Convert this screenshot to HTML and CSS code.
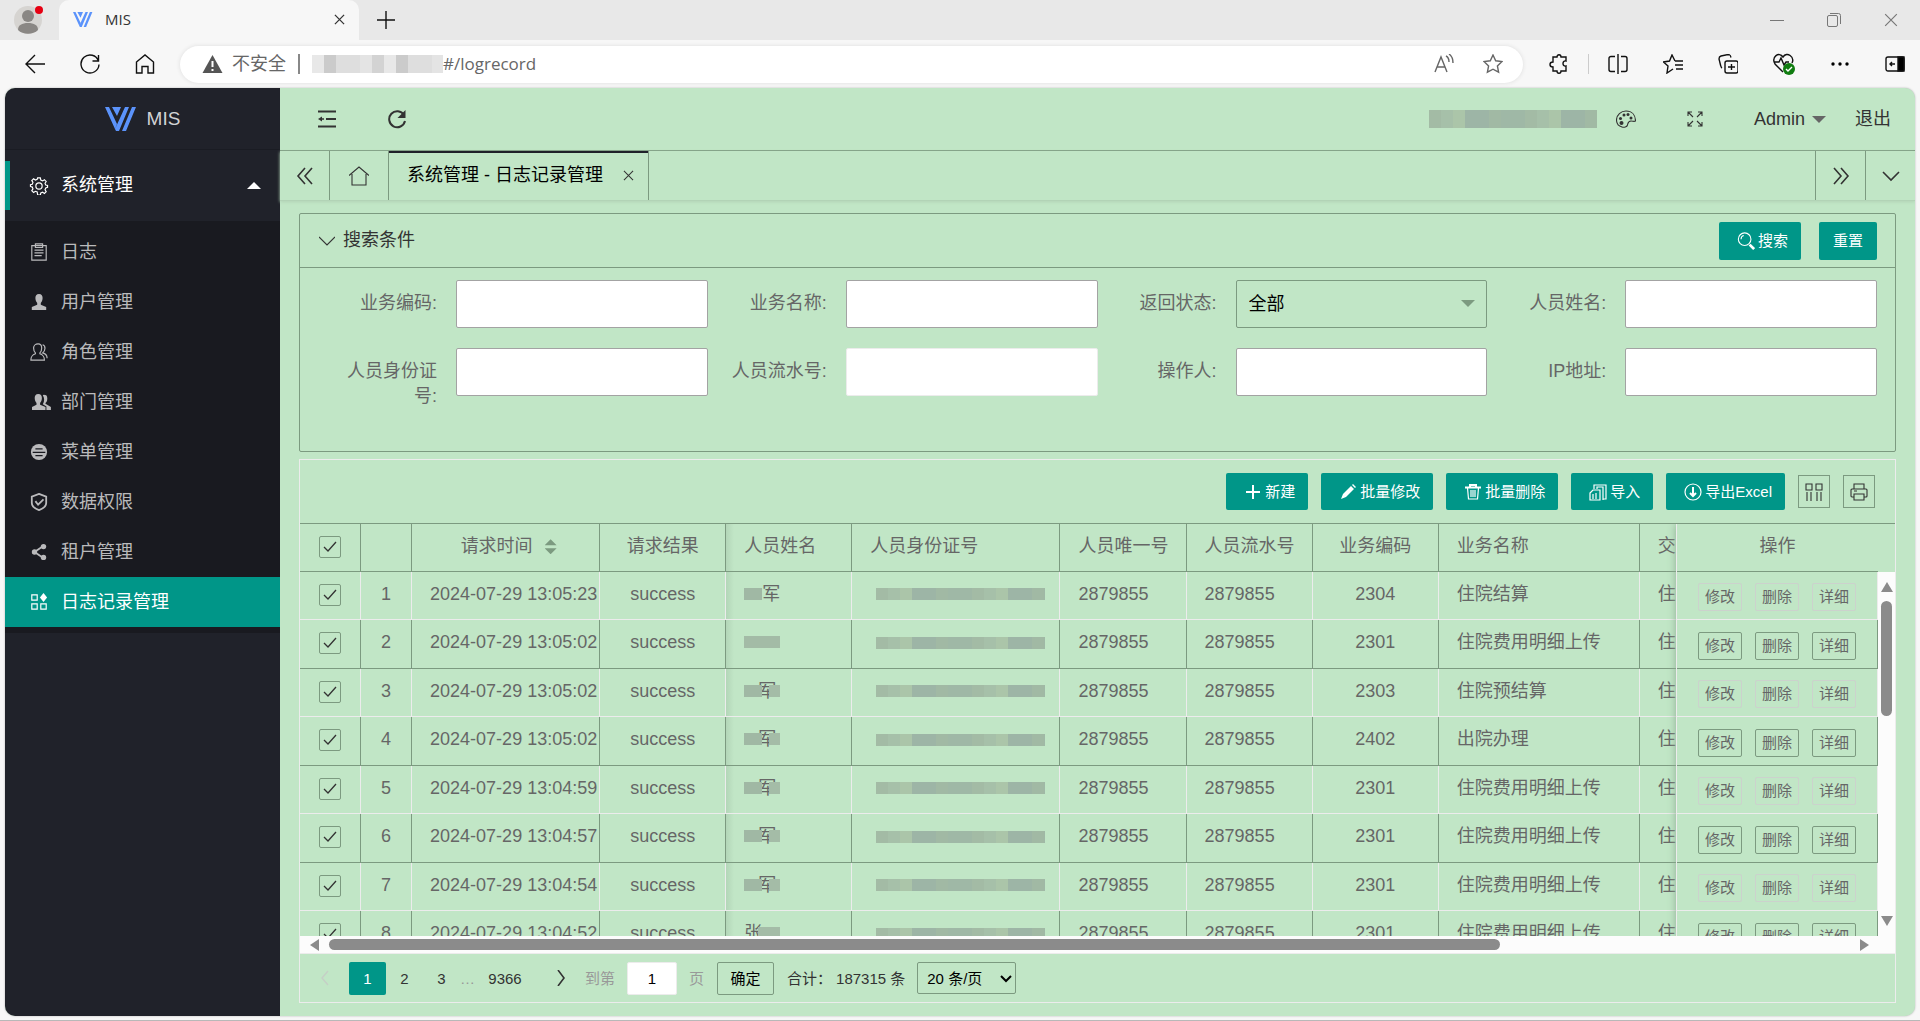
FILE: index.html
```html
<!DOCTYPE html>
<html lang="zh-CN">
<head>
<meta charset="utf-8">
<title>MIS</title>
<link rel="stylesheet" href="styles.css">
</head>
<body>
<svg class="sprite" aria-hidden="true">
  <symbol id="i-logo" viewBox="0 0 32 26"><path fill="#5b93fb" d="M0 1h4l8 17-2 5zM7 1h9l-4 9zM20 1h4L14 25h-3l-1-2zM27 1h4L21 25h-4z"/></symbol>
  <symbol id="i-close" viewBox="0 0 12 12"><path d="M1 1l10 10M11 1L1 11"/></symbol>
  <symbol id="i-star" viewBox="0 0 20 20"><path d="M10 1l2.700 5.800 6.300.8-4.600 4.300 1.200 6.300L10 15.200l-5.600 3 1.200-6.300L1 7.600l6.300-.8z"/></symbol>
</svg>

<header class="browser">
  <div class="tabstrip">
    <div class="profile"><svg viewBox="0 0 28 28"><circle cx="14" cy="14" r="14" fill="#d6d4d1"/><circle cx="14" cy="10" r="6" fill="#8a8784"/><path fill="#8a8784" d="M4 24c0-5 4-7 10-7s10 2 10 7c-5 5-15 5-20 0z"/></svg><i class="dot"></i></div>
    <div class="btab"><svg class="fav"><use href="#i-logo"/></svg><span>MIS</span><button class="plain" aria-label="关闭标签页"><svg class="line s11"><use href="#i-close"/></svg></button></div>
    <button class="plain newtab" aria-label="新建标签页"><svg class="line s18" viewBox="0 0 18 18"><path d="M9 0v18M0 9h18"/></svg></button>
    <div class="winctl">
      <button class="plain" aria-label="最小化"><svg class="line s14" viewBox="0 0 14 14"><path d="M0 7.500h14"/></svg></button>
      <button class="plain" aria-label="还原"><svg class="line s14" viewBox="0 0 14 14"><rect x=".5" y="2.500" width="10" height="11" rx="1.500"/><path d="M3 .5h8.500a2 2 0 012 2V11"/></svg></button>
      <button class="plain" aria-label="关闭"><svg class="line s14" viewBox="0 0 12 12"><use href="#i-close"/></svg></button>
    </div>
  </div>
  <div class="toolbar">
    <nav class="navbtns">
      <button class="plain" aria-label="后退"><svg class="line s20" viewBox="0 0 20 20"><path d="M20 10H1M10 1L1 10l9 9"/></svg></button>
      <button class="plain" aria-label="刷新"><svg class="line s20" viewBox="0 0 20 20"><path d="M18.500 7A9 9 0 1019 10.500M18.500 1v6h-6"/></svg></button>
      <button class="plain" aria-label="主页"><svg class="line s20" viewBox="0 0 20 20"><path d="M1.500 8L10 1l8.500 7v11H13v-6.500H7V19H1.500z"/></svg></button>
    </nav>
    <div class="urlbar">
      <svg class="warn" viewBox="0 0 20 18"><path fill="#555" d="M10 0l10 18H0z"/><path stroke="#fff" stroke-width="2" d="M10 6v6M10 14v2"/></svg>
      <span class="unsafe">不安全</span><i class="vbar"></i>
      <span class="mosaic url"></span><span class="addr">#/logrecord</span>
      <span class="urlicons">
        <svg class="line s20" viewBox="0 0 20 20"><path d="M1 18L7 3l6 15M3 13h8M12 2c2 1 3 3 3 6M15 0c3 2 4 5 4 9"/></svg>
        <svg class="line s20"><use href="#i-star"/></svg>
      </span>
    </div>
    <div class="tools">
      <svg class="line s20" viewBox="0 0 20 20"><path d="M4 3h4c0-3 4-3 4 0h5v4c-4-1-4 6 0 5v5h-5c0 3-4 3-4 0H4v-4c-4 0-4-5 0-5z"/></svg>
      <i class="sep"></i>
      <svg class="line s20" viewBox="0 0 20 20"><path d="M10 0v20M7 2.500H3a2 2 0 00-2 2v11a2 2 0 002 2h4M13 2.500h4a2 2 0 012 2v11a2 2 0 01-2 2h-4"/></svg>
      <svg class="line s20" viewBox="0 0 20 20"><path d="M12 7L9 1 6.500 7 .5 8l4.500 4-1 7 6-4M12 7h8M12 11h8M13 15h7"/></svg>
      <svg class="line s20" viewBox="0 0 20 20"><rect x="7" y="7" width="13" height="12" rx="2"/><path d="M13.500 10v6M10 13h7M4 14c-1-.5-1-1-1.500-3L1 5c0-2 .5-2.500 2-3l7-1.500c2 0 2.500.5 3 3"/></svg>
      <svg class="line s22" viewBox="0 0 22 22"><path d="M10 19L2 11C-2 4 6-2 10 4c4-6 12 0 9 6M1 9h5l2-4 3 7 2-3h3"/><circle cx="16" cy="16" r="6" fill="#107c10" stroke="none"/><path stroke="#fff" d="M13 16l2 2 4-4"/></svg>
      <svg class="s20" viewBox="0 0 20 20"><circle cx="3" cy="10" r="1.700"/><circle cx="10" cy="10" r="1.700"/><circle cx="17" cy="10" r="1.700"/></svg>
      <svg class="line s20" viewBox="0 0 20 20"><rect x="1" y="3" width="18" height="14" rx="2"/><path fill="#000" d="M13 3h6v14h-6z"/><path d="M10 10H5M7 8l-2 2 2 2"/></svg>
    </div>
  </div>
</header>

<div class="app">
  <aside class="side">
    <div class="brand"><svg><use href="#i-logo"/></svg><span>MIS</span></div>
    <a class="group" href="#"><svg class="mi" viewBox="0 0 20 20"><circle cx="10" cy="10" r="3.500"/><path d="M8.500 1h3l.5 2.500 2 .8 2-1.300 2 2-1.300 2 .8 2 2 .5v2l-2 .7-.8 2 1.300 2-2 2-2-1.300-2 .8-.5 2.300h-3L8 16.700l-2-.8-2 1.300-2-2 1.300-2-.8-2-2-.7v-2l2-.5.800-2-1.300-2 2-2 2 1.300 2-.8z"/></svg><span>系统管理</span><i class="up"></i></a>
    <nav class="menu">
      <a href="#"><svg class="mi" viewBox="0 0 20 20"><path d="M2 3h16v16H2zM6 3V1h8v4H6zM5 8h10M5 11h10M5 14h8"/></svg>日志</a>
      <a href="#"><svg class="mi" viewBox="0 0 20 20"><path class="f" d="M10 1c3 0 4 2 4 4.500S13 10 12 11v2l6 2.500V19H2v-3.500L8 13v-2C7 10 6 8 6 5.500S7 1 10 1z"/></svg>用户管理</a>
      <a href="#"><svg class="mi" viewBox="0 0 20 20"><path d="M9 1c3 0 4 2 4 4.500S12 10 11 11v1c4 1.500 5 3 5 7H1c0-4 1-5.500 5-7v-1C5 10 4 8 4 5.500S6 1 9 1zM14 2c4 1 3 7 0 9 4 1 5 3 5 6"/></svg>角色管理</a>
      <a href="#"><svg class="mi wide" viewBox="0 0 24 20"><path class="f" d="M9 1c3 0 4 2 4 4.500S12 10 11 11v2l6 2.500V19H2v-3.500L7 13v-2C6 10 5 8 5 5.500S6 1 9 1zM15 2c3 0 4 1 4 4s-1 4-2 5v1l6 3.500V19h-5v-4l-4-2.500c2-3 2-7 0-10z"/></svg>部门管理</a>
      <a href="#"><svg class="mi" viewBox="0 0 20 20"><circle class="f" cx="10" cy="10" r="9"/><path stroke="#191a20" d="M6 6.500h8M3 10.500h14M6 14h8"/></svg>菜单管理</a>
      <a href="#"><svg class="mi" viewBox="0 0 20 20"><path stroke-width="2" d="M10 1l8 3v7c0 4-4 6.500-8 8-4-1.500-8-4-8-8V4zM6 9l3 4 6-6"/></svg>数据权限</a>
      <a href="#"><svg class="mi" viewBox="0 0 20 20"><path stroke-width="2" d="M14 4L5 10l9 6"/><circle class="f" cx="15" cy="4" r="3"/><circle class="f" cx="5" cy="10" r="3"/><circle class="f" cx="15" cy="16" r="3"/></svg>租户管理</a>
      <a href="#" class="on"><svg class="mi" viewBox="0 0 20 20"><path d="M2 2h6v6H2zM2 12h6v6H2zM12 12h6v6h-6z"/><path class="f" d="M15 0l4 5-4 5-4-5z"/></svg>日志记录管理</a>
    </nav>
  </aside>

  <main class="main">
    <div class="topbar">
      <button class="plain" aria-label="侧边伸缩"><svg class="ico s20" viewBox="0 0 20 20"><path stroke-width="2" d="M1 2.500h18M9 10h10M1 17.500h18"/><path fill="#333" stroke="none" d="M1 10l4-2.500v5z"/><path d="M4 10h3"/></svg></button>
      <button class="plain" aria-label="刷新"><svg class="ico s20" viewBox="0 0 20 20"><path stroke-width="2" d="M17 6a8 8 0 101 6"/><path fill="#333" stroke="none" d="M18.500 1v8h-8z"/></svg></button>
      <div class="right">
        <span class="mosaic head"></span>
        <button class="plain" aria-label="主题"><svg class="ico thin s20" viewBox="0 0 20 20"><path d="M10 2c6 0 9.500 4 9.500 10-1.500 1-2.500 0-4.500 0-3 0-3 2-3.500 4S8 18.500 6 18C2 17 .5 14 .5 11 .5 6 5 2 10 2z"/><g fill="#333" stroke="none"><circle cx="8" cy="6" r="1.500"/><circle cx="12" cy="5.500" r="1.500"/><circle cx="15" cy="9" r="1.500"/><circle cx="4.500" cy="9.500" r="1.500"/><circle cx="5.500" cy="14" r="2"/></g></svg></button>
        <button class="plain" aria-label="全屏"><svg class="ico thin s16" viewBox="0 0 16 16"><path d="M1 5V1h4M1 1l5 5M11 1h4v4M15 1l-5 5M1 11v4h4M1 15l5-5M15 11v4h-4M15 15l-5-5"/></svg></button>
        <a href="#" class="user">Admin<i class="down"></i></a>
        <a href="#">退出</a>
      </div>
    </div>
    <div class="tabs">
      <button class="plain tc first" aria-label="左移"><svg class="ico s18" viewBox="0 0 18 18"><path d="M9 1L2 9l7 8M16 1L9 9l7 8"/></svg></button>
      <button class="plain tc hm" aria-label="首页"><svg class="ico thin s20" viewBox="0 0 20 20"><path d="M0 9.500L10 1l10 8.500M3 8v11h14V8"/></svg></button>
      <div class="tab"><span>系统管理 - 日志记录管理</span><button class="plain" aria-label="关闭"><svg class="ico thin s11"><use href="#i-close"/></svg></button></div>
      <button class="plain tc push" aria-label="右移"><svg class="ico s18" viewBox="0 0 18 18"><path d="M2 1l7 8-7 8M9 1l7 8-7 8"/></svg></button>
      <button class="plain tc" aria-label="更多"><svg class="ico s18" viewBox="0 0 18 18"><path d="M1 5l8 8 8-8"/></svg></button>
    </div>

    <div class="content">
      <form class="search">
        <div class="shead">
          <svg class="ico thin s16" viewBox="0 0 16 16"><path d="M0 4l8 8 8-8"/></svg><h2>搜索条件</h2>
          <button type="button" class="btn"><svg class="bi big" viewBox="0 0 20 20"><circle cx="8.500" cy="8" r="7"/><path d="M4.500 8a4 4 0 013-4"/><path stroke-width="3" d="M14 14l5 5"/></svg>搜索</button>
          <button type="button" class="btn reset">重置</button>
        </div>
        <div class="fields">
          <div class="field"><label for="f1">业务编码:</label><input id="f1"></div>
          <div class="field"><label for="f2">业务名称:</label><input id="f2"></div>
          <div class="field"><label for="f3">返回状态:</label><div class="sel"><select id="f3"><option>全部</option></select><i class="down"></i></div></div>
          <div class="field"><label for="f4">人员姓名:</label><input id="f4"></div>
          <div class="field"><label for="f5">人员身份证号:</label><input id="f5"></div>
          <div class="field"><label for="f6">人员流水号:</label><input id="f6" class="pale"></div>
          <div class="field"><label for="f7">操作人:</label><input id="f7"></div>
          <div class="field"><label for="f8">IP地址:</label><input id="f8"></div>
        </div>
      </form>

      <section class="grid">
        <div class="gtools">
          <button class="btn"><svg class="bi" viewBox="0 0 16 16"><path stroke-width="2" d="M8 1v14M1 8h14"/></svg>新建</button>
          <button class="btn"><svg class="bi" viewBox="0 0 16 16"><path fill="#fff" stroke="none" d="M1 15l2-5 8-8 3 3-8 8zM12 1l1-1 3 3-1 1z"/></svg>批量修改</button>
          <button class="btn"><svg class="bi" viewBox="0 0 16 16"><path stroke-width="2" d="M0 3.500h16M5 3V1h6v2"/><path d="M2.500 4l1 11h9l1-11M6 6v7M8 6v7M10 6v7"/></svg>批量删除</button>
          <button class="btn"><svg class="bi big" viewBox="0 0 18 18"><path d="M5 6V2h12v14h-3M8 6V4h6v13M1 10l3-3h7v10H1zM4 11v5M7 10v6"/></svg>导入</button>
          <button class="btn"><svg class="bi big" viewBox="0 0 18 18"><circle cx="9" cy="9" r="8"/><path stroke-width="2" d="M9 4v9M6 10l3 3 3-3"/></svg>导出Excel</button>
          <button class="sq" aria-label="筛选列"><svg class="ico thin s18" viewBox="0 0 18 18"><path d="M1 1h6v6H1zM11 1h6v6h-6zM2 9v9M6 9v9M12 9v9M16 9v9"/></svg></button>
          <button class="sq" aria-label="打印"><svg class="ico thin s18" viewBox="0 0 18 18"><path d="M4 6V1h10v5M4 14H2a1 1 0 01-1-1V7a1 1 0 011-1h14a1 1 0 011 1v6a1 1 0 01-1 1h-2M4 11h10v6H4zM4 8h3"/></svg></button>
        </div>
        <div class="gbody">
          <div class="data">
            <table>
              <colgroup><col class="w-check"><col class="w-no"><col class="w-time"><col class="w-std"><col class="w-std"><col class="w-id"><col class="w-std"><col class="w-std"><col class="w-std"><col class="w-name"><col class="w-std"></colgroup>
              <thead><tr><th class="c"><input type="checkbox" checked aria-label="全选"></th><th></th><th class="c sorted">请求时间<span class="sort"></span></th><th class="c">请求结果</th><th class="shade">人员姓名</th><th>人员身份证号</th><th>人员唯一号</th><th>人员流水号</th><th class="c">业务编码</th><th>业务名称</th><th>交易</th></tr></thead>
              <tbody>
                <tr><td class="c"><input type="checkbox" checked aria-label="选择第1行"></td><td class="c">1</td><td class="t">2024-07-29 13:05:23</td><td class="c">success</td><td class="shade"><span class="nm a">军</span></td><td><span class="mosaic idn"></span></td><td>2879855</td><td>2879855</td><td class="c">2304</td><td>住院结算</td><td>住院</td></tr>
                <tr><td class="c"><input type="checkbox" checked aria-label="选择第2行"></td><td class="c">2</td><td class="t">2024-07-29 13:05:02</td><td class="c">success</td><td class="shade"><span class="nm b"></span></td><td><span class="mosaic idn"></span></td><td>2879855</td><td>2879855</td><td class="c">2301</td><td>住院费用明细上传</td><td>住院</td></tr>
                <tr><td class="c"><input type="checkbox" checked aria-label="选择第3行"></td><td class="c">3</td><td class="t">2024-07-29 13:05:02</td><td class="c">success</td><td class="shade"><span class="nm">军</span></td><td><span class="mosaic idn"></span></td><td>2879855</td><td>2879855</td><td class="c">2303</td><td>住院预结算</td><td>住院</td></tr>
                <tr><td class="c"><input type="checkbox" checked aria-label="选择第4行"></td><td class="c">4</td><td class="t">2024-07-29 13:05:02</td><td class="c">success</td><td class="shade"><span class="nm">军</span></td><td><span class="mosaic idn"></span></td><td>2879855</td><td>2879855</td><td class="c">2402</td><td>出院办理</td><td>住院</td></tr>
                <tr><td class="c"><input type="checkbox" checked aria-label="选择第5行"></td><td class="c">5</td><td class="t">2024-07-29 13:04:59</td><td class="c">success</td><td class="shade"><span class="nm">军</span></td><td><span class="mosaic idn"></span></td><td>2879855</td><td>2879855</td><td class="c">2301</td><td>住院费用明细上传</td><td>住院</td></tr>
                <tr><td class="c"><input type="checkbox" checked aria-label="选择第6行"></td><td class="c">6</td><td class="t">2024-07-29 13:04:57</td><td class="c">success</td><td class="shade"><span class="nm">军</span></td><td><span class="mosaic idn"></span></td><td>2879855</td><td>2879855</td><td class="c">2301</td><td>住院费用明细上传</td><td>住院</td></tr>
                <tr><td class="c"><input type="checkbox" checked aria-label="选择第7行"></td><td class="c">7</td><td class="t">2024-07-29 13:04:54</td><td class="c">success</td><td class="shade"><span class="nm">军</span></td><td><span class="mosaic idn"></span></td><td>2879855</td><td>2879855</td><td class="c">2301</td><td>住院费用明细上传</td><td>住院</td></tr>
                <tr><td class="c"><input type="checkbox" checked aria-label="选择第8行"></td><td class="c">8</td><td class="t">2024-07-29 13:04:52</td><td class="c">success</td><td class="shade"><span class="nm z">张</span></td><td><span class="mosaic idn"></span></td><td>2879855</td><td>2879855</td><td class="c">2301</td><td>住院费用明细上传</td><td>住院</td></tr>
              </tbody>
            </table>
          </div>
          <div class="ops">
            <table>
              <thead><tr><th class="c">操作</th></tr></thead>
              <tbody>
                <tr><td><div class="acts"><button>修改</button><button>删除</button><button>详细</button></div></td></tr>
                <tr><td><div class="acts"><button>修改</button><button>删除</button><button>详细</button></div></td></tr>
                <tr><td><div class="acts"><button>修改</button><button>删除</button><button>详细</button></div></td></tr>
                <tr><td><div class="acts"><button>修改</button><button>删除</button><button>详细</button></div></td></tr>
                <tr><td><div class="acts"><button>修改</button><button>删除</button><button>详细</button></div></td></tr>
                <tr><td><div class="acts"><button>修改</button><button>删除</button><button>详细</button></div></td></tr>
                <tr><td><div class="acts"><button>修改</button><button>删除</button><button>详细</button></div></td></tr>
                <tr><td><div class="acts"><button>修改</button><button>删除</button><button>详细</button></div></td></tr>
              </tbody>
            </table>
          </div>
          <div class="vcol"><div class="vhead"></div><div class="vscroll"><i class="tri n"></i><i class="thumb"></i><i class="tri s"></i></div></div>
        </div>
        <div class="hscroll"><i class="tri w"></i><div class="track"><i class="thumb"></i></div><i class="tri e"></i></div>
        <footer class="pager">
          <button class="plain pg off" aria-label="上一页"><svg class="s16 line" viewBox="0 0 16 16"><path d="M11 1L5 8l6 7"/></svg></button>
          <a class="pg cur" href="#">1</a><a class="pg" href="#">2</a><a class="pg" href="#">3</a><span class="dots">…</span><a class="pg last" href="#">9366</a>
          <button class="plain pg next" aria-label="下一页"><svg class="s16 ico" viewBox="0 0 16 16"><path d="M5 0l6 8-6 8"/></svg></button>
          <label class="dim" for="pn">到第</label><input id="pn" value="1"><span class="dim">页</span>
          <button class="ok">确定</button><span class="total">合计：</span><span class="cnt">187315 条</span>
          <div class="psel"><select aria-label="每页条数"><option>20 条/页</option></select><svg viewBox="0 0 12 8"><path d="M1 1l5 5 5-5"/></svg></div>
        </footer>
      </section>
    </div>
  </main>
</div>
</body>
</html>
```
FILE: styles.css
```css
:root {
  --green: #c1e6c6;
  --edge: #7c9a80;
  --pale: #ececec;
  --teal: #009688;
}
* { box-sizing: border-box; }
body {
  margin: 0;
  height: 100vh;
  display: flex;
  flex-direction: column;
  background: #f7f7f7;
  border-bottom: 1px solid #b8b8b8;
  font: 18px/25px "Liberation Sans", "Noto Sans CJK SC", sans-serif;
  color: #333;
  overflow: hidden;
}
a { color: inherit; text-decoration: none; }
button, input, select { font: inherit; color: inherit; margin: 0; border-radius: 0; }
svg { display: block; flex: none; }
.sprite { display: none; }
.plain { border: 0; background: none; padding: 0; display: flex; align-items: center; justify-content: center; }
.line { fill: none; stroke: currentColor; stroke-width: 1.4; }
.ico { fill: none; stroke: #333; stroke-width: 1.6; }
.thin { stroke-width: 1.1; }
.s11 { width: 11px; height: 11px; }
.s14 { width: 14px; height: 14px; }
.s16 { width: 16px; height: 16px; }
.s18 { width: 18px; height: 18px; }
.s20 { width: 20px; height: 20px; }
.s22 { width: 22px; height: 22px; }

/* browser frame */
.browser { flex: none; height: 88px; color: #111; }
.tabstrip { height: 40px; background: #e8e8e8; display: flex; align-items: center; }
.profile { position: relative; width: 59px; padding-left: 14px; }
.profile svg { width: 28px; height: 28px; }
.dot { position: absolute; left: 35px; top: 0; width: 8px; height: 8px; border-radius: 50%; background: #e60012; }
.btab { width: 300px; height: 40px; background: #f7f7f7; border-radius: 10px 10px 0 0; display: flex; align-items: center; padding: 0 14px 2px; font: 15px/20px "Open Sans", sans-serif; color: #333; }
.btab span { flex: 1; }
.fav { width: 20px; height: 17px; margin-right: 12px; }
.newtab { width: 54px; height: 40px; }
.winctl { margin-left: auto; display: flex; gap: 43px; padding-right: 22px; color: #777; }
.winctl .line { stroke-width: 1; }
.toolbar { height: 48px; display: flex; align-items: center; }
.navbtns { width: 180px; display: flex; gap: 35px; padding-left: 25px; }
.urlbar { flex: 1; height: 37px; border-radius: 19px; background: #fff; box-shadow: 0 0 4px #ddd; display: flex; align-items: center; padding: 0 20px 0 22px; color: #666; }
.warn { width: 21px; height: 18px; margin-right: 9px; }
.vbar { width: 2px; height: 20px; background: #888; margin: 0 12px 0 12px; }
.addr { font: 17px/24px "Open Sans", sans-serif; }
.urlicons { margin-left: auto; display: flex; gap: 29px; }
.tools { width: 397px; display: flex; align-items: center; gap: 35px; padding-left: 26px; }
.sep { width: 1px; height: 20px; background: #ccc; margin: 0 -16px; }
.mosaic { display: block; background: repeating-linear-gradient(90deg, #a3bba5 0 12px, #a6c0a9 12px 24px, #abc5a9 24px 36px, #9db5a6 36px 60px, #a1b9a4 60px 72px, #9fb8a6 72px 96px); }
.mosaic.url { width: 131px; height: 18px; background: repeating-linear-gradient(90deg, #e8e8e8 0 12px, #cbcbcb 12px 24px, #dedede 24px 48px, #e4e4e4 48px 60px, #d3d3d3 60px 72px); }
.mosaic.head { width: 168px; height: 18px; }

/* application frame */
.app { flex: 1; min-height: 0; display: flex; margin: 0 5px 4px; border-radius: 10px; overflow: hidden; background: var(--green); box-shadow: 0 0 2px #aaa; }
.side { flex: none; width: 275px; background: #20222a; color: #bababc; }
.brand { height: 62px; display: flex; align-items: center; justify-content: center; gap: 10px; border-bottom: 1px solid #1a1c23; color: #d2d3d4; font-size: 19px; }
.brand svg { width: 32px; height: 26px; }
.group { height: 71px; display: flex; align-items: center; padding: 0 19px 0 24px; color: #fff; background: linear-gradient(var(--teal), var(--teal)) 0 11px / 5px 49px no-repeat; }
.group span { flex: 1; }
.up { border: 7px solid transparent; border-top: 0; border-bottom-color: #fff; }
.down { display: block; border: 7px solid transparent; border-bottom: 0; border-top-color: #666; }
.menu { background: #191a20; padding: 6px 0; }
.menu a { height: 50px; display: flex; align-items: center; padding-left: 24px; }
.menu .on { background: var(--teal); color: #fff; }
.mi { width: 20px; height: 18px; margin-right: 12px; fill: none; stroke: currentColor; stroke-width: 1.3; }
.mi.wide { width: 24px; margin-right: 8px; }
.f { fill: currentColor; stroke: none; }

.main { flex: 1; min-width: 0; display: flex; flex-direction: column; }
.topbar { flex: none; height: 63px; display: flex; align-items: center; gap: 50px; padding: 0 24px 0 37px; border-bottom: 1px solid var(--edge); }
.right { margin-left: auto; display: flex; align-items: center; }
.mosaic.head { margin-right: 19px; }
.right .s16 { margin: 0 51px; }
.user { display: flex; align-items: center; gap: 7px; margin-right: 29px; }
.tabs { flex: none; height: 50px; display: flex; border-bottom: 1px solid #b2d3b6; box-shadow: 0 1px 3px #b2d3b6; }
.tc { width: 50px; border-left: 1px solid var(--edge); }
.tc.first { width: 49px; border-left: 0; }
.tc.hm { width: 59px; }
.push { margin-left: auto; }
.tab { display: flex; align-items: center; gap: 20px; padding: 0 14px 0 18px; border: 1px solid var(--edge); border-width: 0 1px; box-shadow: inset 0 2px #20222a; color: #000; }
.content { flex: 1; min-height: 0; display: flex; flex-direction: column; gap: 7px; padding: 12px 19px 13px 19px; }

/* search form */
.search { flex: none; border: 1px solid var(--edge); border-radius: 2px; }
.shead { height: 54px; display: flex; align-items: center; padding: 0 18px 0 19px; border-bottom: 1px solid var(--edge); }
.shead h2 { flex: 1; margin: 0 0 0 8px; font-size: 18px; font-weight: 400; }
.btn { height: 38px; display: flex; align-items: center; gap: 3px; padding: 0 13px 0 18px; border: 0; border-radius: 2px; background: var(--teal); color: #fff; font-size: 15px; white-space: nowrap; }
.reset { margin-left: 18px; padding: 0 14px; }
.bi { width: 18px; height: 16px; fill: none; stroke: #fff; stroke-width: 1.2; }
.bi.big { height: 18px; }
.fields { display: grid; grid-template-columns: repeat(4, 1fr); row-gap: 20px; padding: 12px 18px 55px; }
.field { display: flex; align-items: flex-start; height: 48px; color: #666; }
.field label { flex: none; width: 138px; padding: 11px 19px 0; text-align: right; }
.field input, .field select { flex: 1; min-width: 0; width: 100%; height: 48px; border: 1px solid #a3a3a3; border-radius: 2px; background: #fff; padding: 0 12px; }
.field input.pale { border-color: var(--pale); }
.sel { flex: 1; position: relative; }
.field select { appearance: none; background: var(--green); border-color: var(--edge); color: #000; }
.sel .down { position: absolute; right: 12px; top: 20px; border-top-color: var(--edge); }

/* data grid */
.grid { flex: 1; min-height: 0; display: flex; flex-direction: column; border: 1px solid var(--pale); }
.gtools { flex: none; height: 63px; display: flex; align-items: center; justify-content: flex-end; gap: 13px; padding-right: 20px; }
.gtools .btn { height: 37px; }
.sq { width: 32px; height: 33px; padding: 0; border: 1px solid var(--edge); background: none; display: flex; align-items: center; justify-content: center; }
.gbody { flex: 1; min-height: 0; display: flex; overflow: hidden; border-top: 1px solid var(--edge); color: #666; }
.data { flex: 1; min-width: 0; overflow: hidden; }
table { border-collapse: separate; border-spacing: 0; table-layout: fixed; }
.data table { width: 1466px; }
.ops { flex: none; width: 202px; border-left: 1px solid var(--pale); box-shadow: 0 0 8px #8fae94; }
.ops table { width: 100%; }
th, td { height: 48px; padding: 0 0 3px 18px; text-align: left; font-weight: 400; white-space: nowrap; border: 1px solid var(--pale); border-width: 0 1px 1px 0; overflow: hidden; line-height: 25px; }
th, tr:nth-child(even) td { border-color: var(--edge); }
tr:nth-child(even) td { height: 49px; }
.ops th { border-right: 0; }
.c { padding-left: 0; text-align: center; }
.sorted { padding-left: 6px; }
.shade { background: linear-gradient(90deg, #b3d6b8, transparent 8px); }
.w-check { width: 61px; }
.w-no { width: 51px; }
.w-time { width: 188px; }
.w-std { width: 126px; }
.w-id { width: 208px; }
.w-name { width: 201px; }
input[type=checkbox] {
  appearance: none;
  display: inline-block;
  vertical-align: middle;
  width: 22px;
  height: 22px;
  border: 1px solid var(--edge);
  border-radius: 2px;
  background: url("data:image/svg+xml,%3Csvg xmlns='http://www.w3.org/2000/svg' viewBox='0 0 20 20'%3E%3Cpath d='M4 10l4 4 8-9' fill='none' stroke='%23333' stroke-width='1.3'/%3E%3C/svg%3E");
}
.sort { display: inline-block; vertical-align: middle; width: 12px; height: 15px; margin: 0 0 0 12px; background: var(--edge); clip-path: polygon(0 6px, 50% 0, 100% 6px, 0 6px, 0 9px, 100% 9px, 50% 15px, 0 9px); }
.mosaic.idn { width: 169px; height: 12px; margin-left: 6px; }
.nm { position: relative; display: block; width: 36px; height: 25px; padding-left: 14px; overflow: hidden; }
.nm::after { content: ""; position: absolute; left: 0; top: 6px; width: 36px; height: 12px; background: linear-gradient(90deg, #a0b8a4 0 18px, transparent 18px 25px, #a4bca7 25px); }
.nm.a { padding-left: 18px; }
.nm.a::after { width: 18px; }
.nm.b::after { background: #a3bba6; }
.nm.z { padding-left: 0; }
.nm.z::after { left: 14px; width: 22px; height: 19px; background: #a4bca7; }
.acts { display: flex; gap: 13px; padding: 6px 0 0 3px; }
.acts button { width: 44px; height: 28px; padding: 0; border: 1px solid #ccd2cd; border-radius: 2px; background: none; font-size: 15px; line-height: 24px; }
tr:nth-child(even) .acts button { border-color: var(--edge); }
.vcol { position: relative; flex: none; width: 17px; display: flex; flex-direction: column; background: var(--green); }
.vhead { height: 48px; }
.vscroll { flex: 1; background: #fcfcfc; display: flex; flex-direction: column; align-items: center; padding: 10px 0; }
.thumb { display: block; background: #8b8b8b; border-radius: 6px; }
.vscroll .thumb { width: 11px; height: 115px; margin-top: 9px; }
.tri { display: block; border: 6px solid transparent; }
.n { border-top: 0; border-bottom: 10px solid #8b8b8b; }
.s { border-bottom: 0; border-top: 10px solid #8b8b8b; margin-top: auto; }
.w { border-left: 0; border-right: 9px solid #8b8b8b; }
.e { border-right: 0; border-left: 9px solid #8b8b8b; }
.hscroll { flex: none; height: 18px; background: #fcfcfc; display: flex; align-items: center; gap: 10px; padding: 0 26px 0 10px; border-bottom: 1px solid var(--pale); }
.track { flex: 1; }
.hscroll .thumb { width: 77%; height: 11px; }

.pager { flex: none; height: 48px; display: flex; align-items: center; font-size: 15px; padding-left: 13px; }
.pg { width: 37px; height: 33px; display: flex; align-items: center; justify-content: center; }
.pg.off { width: 24px; margin-right: 12px; color: #c5cfc6; }
.cur { background: var(--teal); color: #fff; border-radius: 2px; }
.dots { width: 14px; color: #999; text-align: center; }
.pg.last { width: 62px; }
.pg.next { width: 49px; }
.dim { color: #999; }
.pager input { width: 50px; height: 33px; margin: 0 12px; border: 1px solid var(--pale); border-radius: 2px; background: #fff; text-align: center; color: #000; padding: 0; }
.ok { width: 57px; height: 33px; margin: 0 13px; padding: 0; border: 1px solid var(--edge); border-radius: 2px; background: none; color: #000; }
.cnt { margin: 0 12px 0 4px; }
.psel { position: relative; }
.psel select { width: 99px; height: 32px; padding: 0 9px; appearance: none; border: 1px solid var(--edge); border-radius: 2px; background: none; color: #000; }
.psel svg { position: absolute; right: 4px; top: 13px; width: 12px; height: 8px; fill: none; stroke: #000; stroke-width: 2; }
```
